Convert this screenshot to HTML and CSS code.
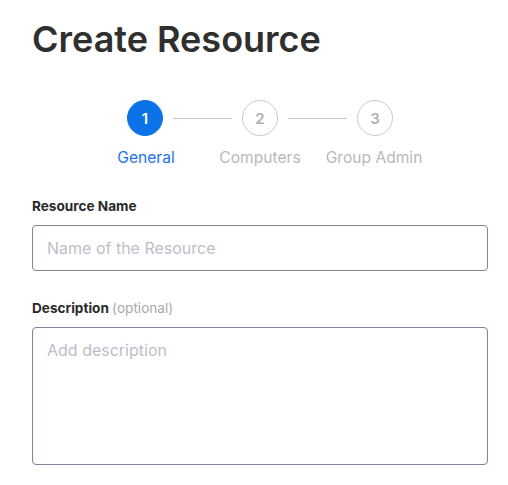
FILE: index.html
```html
<!DOCTYPE html>
<html>
<head>
<meta charset="utf-8">
<link rel="stylesheet" href="styles.css">
</head>
<body>
<main class="page">
  <h1 class="title">Create Resource</h1>
  <div class="stepper">
    <div class="circles">
      <span class="circle active">1</span>
      <span class="line"></span>
      <span class="circle">2</span>
      <span class="line"></span>
      <span class="circle">3</span>
    </div>
    <div class="labels">
      <span class="step-label active">General</span>
      <span class="step-label">Computers</span>
      <span class="step-label">Group Admin</span>
    </div>
  </div>
  <div class="field">
    <label class="label">Resource Name</label>
    <input class="input" type="text" placeholder="Name of the Resource">
  </div>
  <div class="field field-desc">
    <label class="label">Description <span class="optional">(optional)</span></label>
    <textarea class="textarea" placeholder="Add description"></textarea>
  </div>
</main>
</body>
</html>
```

FILE: styles.css
```css
* { box-sizing: border-box; }
html, body { margin: 0; padding: 0; background: #fff; }
body { font-family: Inter, "Noto Sans", sans-serif; color: #2e2e2e; }
.page { padding: 17px 20px 0 32px; }
.title {
  margin: 0;
  font-size: 36px;
  line-height: 44px;
  font-weight: 600;
  color: #2f2f2f;
}
.stepper { margin-top: 39px; display: flex; flex-direction: column; align-items: center; }
.circles { display: flex; align-items: center; gap: 10px; }
.circle {
  width: 36px; height: 36px; border-radius: 50%;
  border: 1.5px solid #c9c9c9; color: #b0b0b0;
  display: flex; align-items: center; justify-content: center;
  font-size: 15px; font-weight: 600;
}
.circle.active { background: #0b72e7; border-color: #0b72e7; color: #fff; }
.line { width: 59px; height: 1px; background: #c4c4c4; }
.labels { display: grid; grid-template-columns: repeat(3, 114px); margin-top: 12px; }
.step-label { text-align: center; font-size: 15.6px; line-height: 20px; color: #b9b9b9; white-space: nowrap; }
.step-label.active { color: #1a73e8; }
.field { display: flex; flex-direction: column; margin-top: 30px; }
.field-desc { margin-top: 29px; }
.label { font-size: 13.6px; line-height: 16px; font-weight: 700; color: #2a2a2a; margin-bottom: 11px; }
.optional { font-weight: 400; color: #a8a8a8; }
.input, .textarea {
  width: 100%;
  border: 1px solid #7d849c;
  border-radius: 4px;
  font-family: Inter, "Noto Sans", sans-serif;
  font-size: 16px;
  color: #333;
  padding: 0 14px;
  outline: none;
  background: #fff;
}
.input { height: 46px; }
.textarea { height: 138px; padding-top: 10px; line-height: 24px; resize: none; display: block; }
.input::placeholder, .textarea::placeholder { color: #bac0c9; }
```
